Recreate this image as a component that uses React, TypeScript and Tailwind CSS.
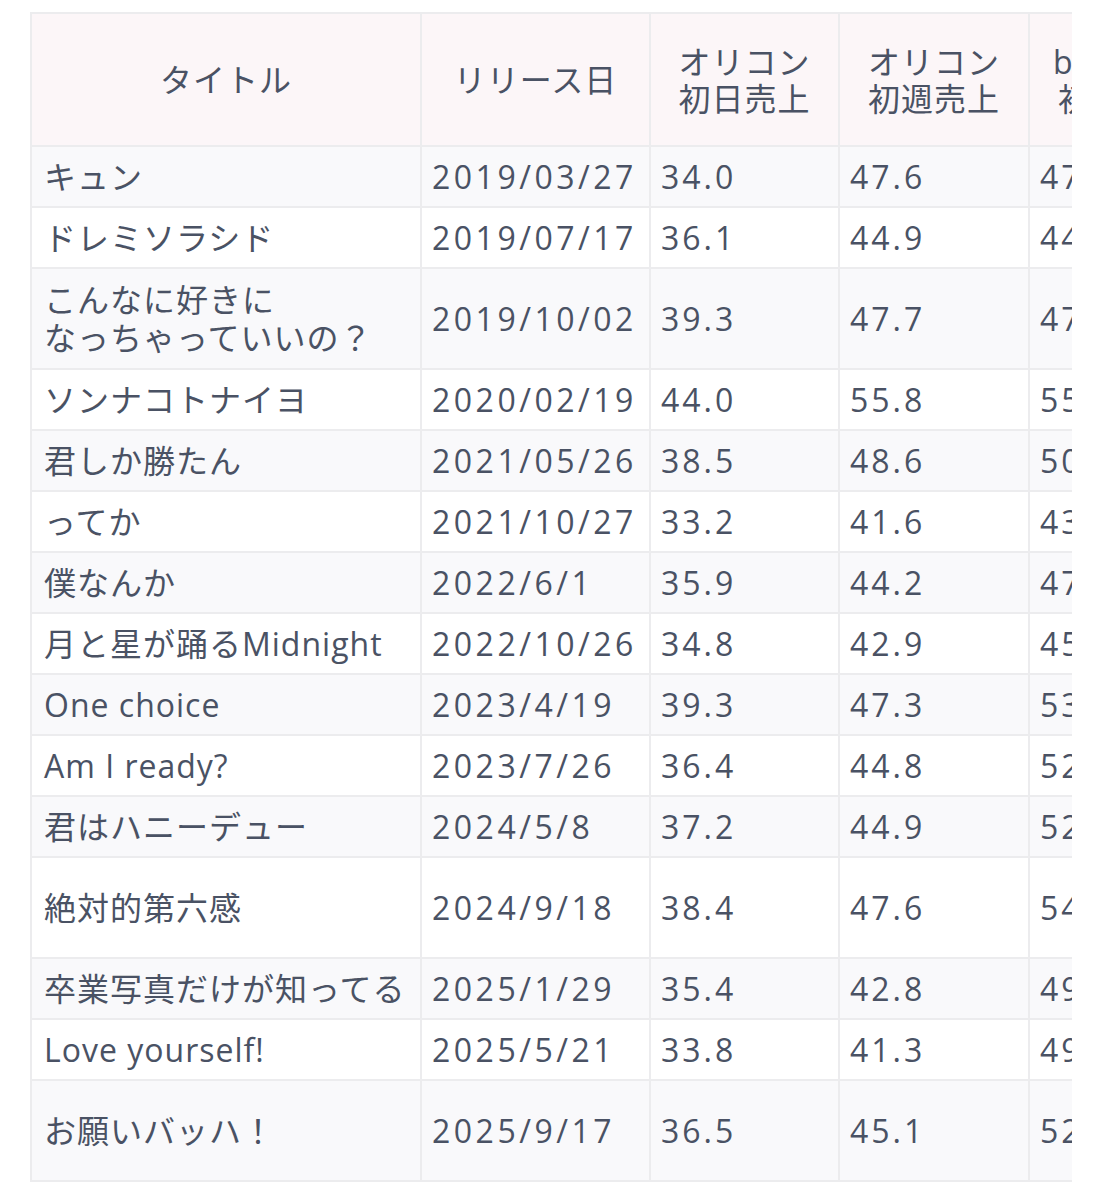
const rows = [
  { title: 'キュン', date: '2019/03/27', d1: '34.0', w1: '47.6', b: '47.9', tint: true },
  { title: 'ドレミソラシド', date: '2019/07/17', d1: '36.1', w1: '44.9', b: '44.6' },
  { title: ['こんなに好きに', 'なっちゃっていいの？'], date: '2019/10/02', d1: '39.3', w1: '47.7', b: '47.2', tint: true, tall: true },
  { title: 'ソンナコトナイヨ', date: '2020/02/19', d1: '44.0', w1: '55.8', b: '55.3' },
  { title: '君しか勝たん', date: '2021/05/26', d1: '38.5', w1: '48.6', b: '50.1', tint: true },
  { title: 'ってか', date: '2021/10/27', d1: '33.2', w1: '41.6', b: '43.8' },
  { title: '僕なんか', date: '2022/6/1', d1: '35.9', w1: '44.2', b: '47.0', tint: true },
  { title: '月と星が踊るMidnight', date: '2022/10/26', d1: '34.8', w1: '42.9', b: '45.4' },
  { title: 'One choice', date: '2023/4/19', d1: '39.3', w1: '47.3', b: '53.2', tint: true },
  { title: 'Am I ready?', date: '2023/7/26', d1: '36.4', w1: '44.8', b: '52.0' },
  { title: '君はハニーデュー', date: '2024/5/8', d1: '37.2', w1: '44.9', b: '52.7', tint: true },
  { title: '絶対的第六感', date: '2024/9/18', d1: '38.4', w1: '47.6', b: '54.1', tall: true },
  { title: '卒業写真だけが知ってる', date: '2025/1/29', d1: '35.4', w1: '42.8', b: '49.5', tint: true },
  { title: 'Love yourself!', date: '2025/5/21', d1: '33.8', w1: '41.3', b: '49.9' },
  { title: 'お願いバッハ！', date: '2025/9/17', d1: '36.5', w1: '45.1', b: '52.3', tint: true, tall: true },
]

const font = { fontFamily: '"Open Sans", "Noto Sans CJK JP", sans-serif' }

function HeadCell({ w, lines }: { w: string; lines: string[] }) {
  return (
    <div className={`${w} shrink-0 h-full border-r-2 border-[#ececee] flex flex-col items-center justify-center text-center leading-[37px] tracking-[1px]`}>
      {lines.map((l) => (
        <span key={l} className="whitespace-nowrap">{l}</span>
      ))}
    </div>
  )
}

export default function App() {
  return (
    <div className="min-h-screen bg-white pt-[12px]" style={font}>
      <div className="ml-[30px] w-[1042px] overflow-hidden border-t-2 border-l-2 border-[#ececee] text-[32px] text-[#4a5264]">
        <div className="w-[1190px]">
          {/* ヘッダー */}
          <div className="flex h-[133px] border-b-2 border-[#ececee] bg-[#fcf6f8]">
            <HeadCell w="w-[390px]" lines={['タイトル']} />
            <HeadCell w="w-[229px]" lines={['リリース日']} />
            <HeadCell w="w-[189px]" lines={['オリコン', '初日売上']} />
            <HeadCell w="w-[190px]" lines={['オリコン', '初週売上']} />
            <HeadCell w="w-[190px]" lines={['billboard', '初週売上']} />
          </div>

          {rows.map((r, i) => (
            <div
              key={i}
              className={`flex border-b-2 border-[#ececee] ${r.tall ? 'h-[101px]' : 'h-[61px]'} ${r.tint ? 'bg-[#f9f9fb]' : 'bg-white'}`}
            >
              <div className="w-[390px] shrink-0 border-r-2 border-[#ececee] pl-3 flex flex-col justify-center leading-[38px] tracking-[1px] whitespace-nowrap">
                {Array.isArray(r.title) ? r.title.map((t) => <span key={t}>{t}</span>) : r.title}
              </div>
              <div className="w-[229px] shrink-0 border-r-2 border-[#ececee] pl-[10px] flex items-center tracking-[3.5px] whitespace-nowrap">
                {r.date}
              </div>
              <div className="w-[189px] shrink-0 border-r-2 border-[#ececee] pl-[10px] flex items-center tracking-[3px]">
                {r.d1}
              </div>
              <div className="w-[190px] shrink-0 border-r-2 border-[#ececee] pl-[10px] flex items-center tracking-[3px]">
                {r.w1}
              </div>
              <div className="w-[190px] shrink-0 border-r-2 border-[#ececee] pl-[10px] flex items-center tracking-[3px]">
                {r.b}
              </div>
            </div>
          ))}
        </div>
      </div>
    </div>
  )
}
